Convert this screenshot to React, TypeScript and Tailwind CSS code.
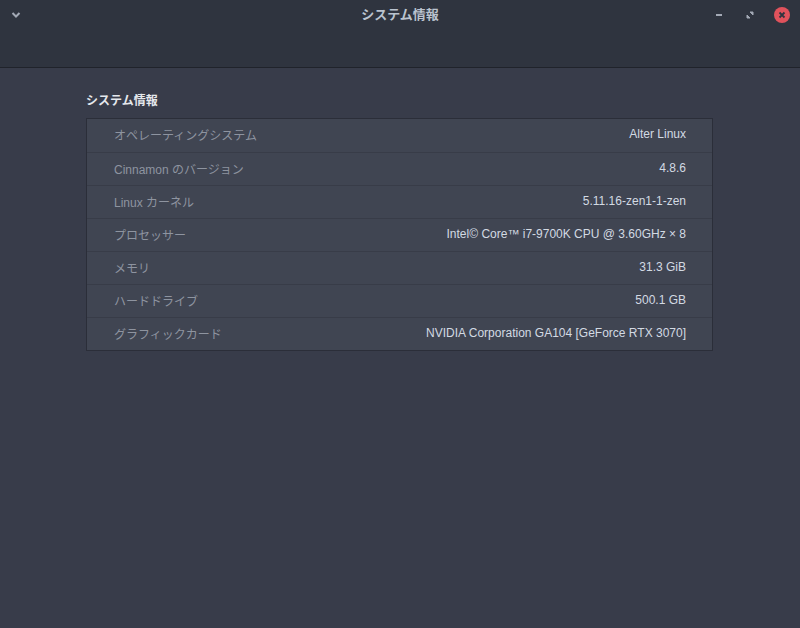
import React from 'react';

const rows = [
  { label: 'オペレーティングシステム', value: 'Alter Linux' },
  { label: 'Cinnamon のバージョン', value: '4.8.6' },
  { label: 'Linux カーネル', value: '5.11.16-zen1-1-zen' },
  { label: 'プロセッサー', value: 'Intel© Core™ i7-9700K CPU @ 3.60GHz × 8' },
  { label: 'メモリ', value: '31.3 GiB' },
  { label: 'ハードドライブ', value: '500.1 GB' },
  { label: 'グラフィックカード', value: 'NVIDIA Corporation GA104 [GeForce RTX 3070]' },
];

export default function App() {
  return (
    <div
      className="w-[800px] h-[628px] flex flex-col bg-[#383c4a] overflow-hidden"
      style={{ fontFamily: '"Liberation Sans", "Noto Sans CJK JP", sans-serif' }}
    >
      {/* ヘッダーバー */}
      <div className="h-[68px] shrink-0 bg-[#2f343f] border-b border-[#20232b]">
        <div className="h-[30px] grid grid-cols-[1fr_auto_1fr] items-center px-[10px]">
          <svg width="12" height="12" viewBox="0 0 12 12" className="text-[#a3a9b5]">
            <path d="M2.5 4l3.5 3.5L9.5 4" fill="none" stroke="currentColor" strokeWidth="2" />
          </svg>
          <div className="text-[13px] font-bold text-[#bac3cf]">システム情報</div>
          <div className="flex items-center justify-end gap-[17px]">
            <svg width="14" height="14" viewBox="0 0 14 14">
              <rect x="4" y="6" width="6" height="2" fill="#a3a9b5" />
            </svg>
            <svg width="14" height="14" viewBox="0 0 14 14">
              <path d="M7 4h3v3z M4 7v3h3z" fill="#a3a9b5" stroke="#a3a9b5" strokeWidth="1" />
            </svg>
            <div className="w-[16px] h-[16px] rounded-full bg-[#e0525c] flex items-center justify-center">
              <svg width="8" height="8" viewBox="0 0 8 8">
                <path d="M1.5 1.5l5 5M6.5 1.5l-5 5" stroke="#2f343f" strokeWidth="1.8" />
              </svg>
            </div>
          </div>
        </div>
      </div>

      {/* 本体 */}
      <div className="pl-[86px] pr-[87px] pt-[23px]">
        <h2 className="text-[12px] font-bold text-[#e5e8ed] h-[20px] leading-[20px] mb-[7px]">
          システム情報
        </h2>
        <div className="border border-[#2b2e39] bg-[#404552]">
          {rows.map((row, i) => (
            <div
              key={row.label}
              className={`h-[33px] flex items-center justify-between pl-[27px] pr-[26px] text-[12px] ${
                i > 0 ? 'border-t border-[#383c48]' : ''
              }`}
            >
              <span className="text-[#8e94a0] pt-[1px]">{row.label}</span>
              <span className="text-[#d3dae3] -mt-[3px]">{row.value}</span>
            </div>
          ))}
        </div>
      </div>
    </div>
  );
}
